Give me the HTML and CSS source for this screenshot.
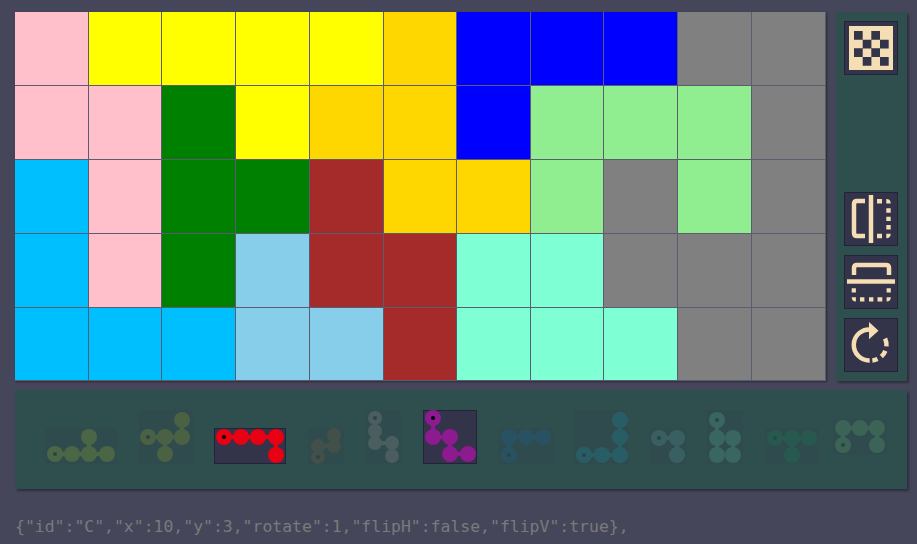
FILE: index.html
```html
<!DOCTYPE html>
<html lang="en">
<head>
    <meta charset="UTF-8">
    <title>Puzzle</title>
    <link rel="stylesheet" href="styles.css">
</head>
<body>
<div class="top">
    <div class="board">
        <i class="c-pink"></i><i class="c-yellow"></i><i class="c-yellow"></i><i class="c-yellow"></i><i class="c-yellow"></i><i class="c-gold"></i><i class="c-blue"></i><i class="c-blue"></i><i class="c-blue"></i><i class="c-gray"></i><i class="c-gray"></i>
        <i class="c-pink"></i><i class="c-pink"></i><i class="c-green"></i><i class="c-yellow"></i><i class="c-gold"></i><i class="c-gold"></i><i class="c-blue"></i><i class="c-lgreen"></i><i class="c-lgreen"></i><i class="c-lgreen"></i><i class="c-gray"></i>
        <i class="c-dsky"></i><i class="c-pink"></i><i class="c-green"></i><i class="c-green"></i><i class="c-brown"></i><i class="c-gold"></i><i class="c-gold"></i><i class="c-lgreen"></i><i class="c-gray"></i><i class="c-lgreen"></i><i class="c-gray"></i>
        <i class="c-dsky"></i><i class="c-pink"></i><i class="c-green"></i><i class="c-sky"></i><i class="c-brown"></i><i class="c-brown"></i><i class="c-aqua"></i><i class="c-aqua"></i><i class="c-gray"></i><i class="c-gray"></i><i class="c-gray"></i>
        <i class="c-dsky"></i><i class="c-dsky"></i><i class="c-dsky"></i><i class="c-sky"></i><i class="c-sky"></i><i class="c-brown"></i><i class="c-aqua"></i><i class="c-aqua"></i><i class="c-aqua"></i><i class="c-gray"></i><i class="c-gray"></i>
    </div>
    <div class="tools">
        <button class="tool">
            <svg width="54" height="54" viewBox="0 0 54 54">
                <rect class="fill" x="5" y="5" width="44" height="44"/>
                <path class="dark" d="M10 10h8.700v8.700h-8.700zM27.300 10h8.700v8.700h-8.700zM18.700 18.700h8.700v8.700h-8.700zM36 18.700h8.700v8.700h-8.700zM10 27.300h8.700v8.700h-8.700zM27.300 27.300h8.700v8.700h-8.700zM18.700 36h8.700v8.700h-8.700zM36 36h8.700v8.700h-8.700z"/>
            </svg>
        </button>
        <button class="tool push">
            <svg width="54" height="54" viewBox="0 0 54 54">
                <path class="line" d="M21 9H13Q10 9 10 12V41Q10 44 13 44H21"/>
                <path class="line" d="M27 3V51"/>
                <path class="fill" d="M33 7h5v4.500h-5zM42.300 7q4.400 0 4.400 4.400h-4.400zM42.300 16.300h4.400v4.400h-4.400zM42.300 24.700h4.400v4.400h-4.400zM42.300 33h4.400v4.400h-4.400zM42.300 41.800h4.400q0 4.400 -4.400 4.400zM33 41.800h5v4.400h-5z"/>
            </svg>
        </button>
        <button class="tool">
            <svg width="54" height="54" viewBox="0 0 54 54">
                <path class="line" d="M10 20V13Q10 10 13 10H42Q45 10 45 13V20"/>
                <path class="line" d="M3 26.500H51"/>
                <path class="fill" d="M7.700 33.300h4.200v4.200h-4.200zM42.600 33.300h4.200v4.200h-4.200zM7.700 42.200h4.200v4.200q-4.200 0 -4.200 -4.200zM16 42.200h4.400v4.200h-4.400zM25 42.200h4.400v4.200h-4.400zM33.500 42.200h4.800v4.200h-4.800zM42.600 42.200h4.200q0 4.200 -4.200 4.200z"/>
            </svg>
        </button>
        <button class="tool">
            <svg width="54" height="54" viewBox="0 0 54 54">
                <path class="line" d="M27 11.500A15.500 15.500 0 1 0 25.700 42.400"/>
                <path class="line" d="M41.050 20.450A15.500 15.500 0 0 1 42.440 28.350M41.370 32.800A15.500 15.500 0 0 1 37.370 38.500M33.550 41.050A15.500 15.500 0 0 1 28.350 42.440"/>
                <path class="fill" d="M25 4L34.500 12.700L25 21.300z"/>
            </svg>
        </button>
    </div>
</div>

<div class="tray">
    <svg class="piece" width="72" height="36"><rect class="bg" width="72" height="36"/>
        <g class="c-yellow"><path class="link" d="M10 26H62M44 26V9"/>
        <circle cx="10" cy="26" r="8"/><circle cx="27" cy="26" r="8"/><circle cx="44" cy="26" r="8"/><circle cx="62" cy="26" r="8"/><circle cx="44" cy="9" r="8"/></g>
        <circle class="dot" cx="10" cy="26" r="2"/>
    </svg>
    <svg class="piece" width="54" height="54"><rect class="bg" width="54" height="54"/>
        <g class="c-gold"><path class="link" d="M9 27H43M43 27V10M26 27V44"/>
        <circle cx="9" cy="27" r="8"/><circle cx="26" cy="27" r="8"/><circle cx="43" cy="27" r="8"/><circle cx="43" cy="10" r="8"/><circle cx="26" cy="44" r="8"/></g>
        <circle class="dot" cx="9" cy="27" r="2"/>
    </svg>
    <svg class="piece on" width="72" height="36"><rect class="bg" x=".5" y=".5" width="71" height="35"/>
        <g class="c-red"><path class="link" d="M10 9H62V27"/>
        <circle cx="10" cy="9" r="8"/><circle cx="27" cy="9" r="8"/><circle cx="44" cy="9" r="8"/><circle cx="62" cy="9" r="8"/><circle cx="62" cy="27" r="8"/></g>
        <circle class="dot" cx="10" cy="9" r="2"/>
    </svg>
    <svg class="piece" width="36" height="36"><rect class="bg" width="36" height="36"/>
        <g class="c-brown"><path class="link" d="M10 29V18H26V7"/>
        <circle cx="10" cy="29" r="7"/><circle cx="10" cy="18" r="7"/><circle cx="26" cy="18" r="7"/><circle cx="26" cy="7" r="7"/></g>
        <circle class="dot" cx="10" cy="29" r="2"/>
    </svg>
    <svg class="piece" width="36" height="54"><rect class="bg" width="36" height="54"/>
        <g class="c-pink"><path class="link" d="M10 8V33H27V46"/>
        <circle cx="10" cy="8" r="7"/><circle cx="10" cy="21" r="7"/><circle cx="10" cy="33" r="7"/><circle cx="27" cy="33" r="7"/><circle cx="27" cy="46" r="7"/></g>
        <circle class="dot" cx="10" cy="8" r="2"/>
    </svg>
    <svg class="piece on" width="54" height="54"><rect class="bg" x=".5" y=".5" width="53" height="53"/>
        <g class="c-purple"><path class="link" d="M10 8V27H27V44H45"/>
        <circle cx="10" cy="8" r="8"/><circle cx="10" cy="27" r="8"/><circle cx="27" cy="27" r="8"/><circle cx="27" cy="44" r="8"/><circle cx="45" cy="44" r="8"/></g>
        <circle class="dot" cx="10" cy="8" r="2"/>
    </svg>
    <svg class="piece" width="54" height="36"><rect class="bg" width="54" height="36"/>
        <g class="c-blue"><path class="link" d="M10 27V9H44"/>
        <circle cx="10" cy="27" r="8"/><circle cx="10" cy="9" r="8"/><circle cx="27" cy="9" r="8"/><circle cx="44" cy="9" r="8"/></g>
        <circle class="dot" cx="10" cy="27" r="2"/>
    </svg>
    <svg class="piece" width="54" height="54"><rect class="bg" width="54" height="54"/>
        <g class="c-dsky"><path class="link" d="M10 45H46V10"/>
        <circle cx="10" cy="45" r="8"/><circle cx="28" cy="45" r="8"/><circle cx="46" cy="45" r="8"/><circle cx="46" cy="27" r="8"/><circle cx="46" cy="10" r="8"/></g>
        <circle class="dot" cx="10" cy="45" r="2"/>
    </svg>
    <svg class="piece" width="36" height="36"><rect class="bg" width="36" height="36"/>
        <g class="c-sky"><path class="link" d="M9 10H27V27"/>
        <circle cx="9" cy="10" r="8"/><circle cx="27" cy="10" r="8"/><circle cx="27" cy="27" r="8"/></g>
        <circle class="dot" cx="9" cy="10" r="2"/>
    </svg>
    <svg class="piece" width="36" height="54"><rect class="bg" width="36" height="54"/>
        <g class="c-aqua"><path class="link" d="M10 10V45M26 28V45"/>
        <circle cx="10" cy="10" r="8"/><circle cx="10" cy="28" r="8"/><circle cx="10" cy="45" r="8"/><circle cx="26" cy="28" r="8"/><circle cx="26" cy="45" r="8"/></g>
        <circle class="dot" cx="10" cy="10" r="2"/>
    </svg>
    <svg class="piece" width="54" height="36"><rect class="bg" width="54" height="36"/>
        <g class="c-green"><path class="link" d="M10 10H44M27 10V27"/>
        <circle cx="10" cy="10" r="8"/><circle cx="27" cy="10" r="8"/><circle cx="44" cy="10" r="8"/><circle cx="27" cy="27" r="8"/></g>
        <circle class="dot" cx="10" cy="10" r="2"/>
    </svg>
    <svg class="piece last" width="54" height="36"><rect class="bg" width="54" height="36"/>
        <g class="c-lgreen"><path class="link" d="M10 26V9H44V26"/>
        <circle cx="10" cy="26" r="8"/><circle cx="10" cy="9" r="8"/><circle cx="27" cy="9" r="8"/><circle cx="44" cy="9" r="8"/><circle cx="44" cy="26" r="8"/></g>
        <circle class="dot" cx="10" cy="26" r="2"/>
    </svg>
</div>

<p class="output">{"id":"C","x":10,"y":3,"rotate":1,"flipH":false,"flipV":true},</p>
</body>
</html>
```

FILE: styles.css
```css
* {
    margin: 0;
    padding: 0;
    box-sizing: border-box;
}

body {
    width: 917px;
    height: 544px;
    padding: 12px 10px 0 15px;
    overflow: hidden;
    background: #46465a;
}

.top {
    display: flex;
    gap: 10px;
}

/* board */
.board {
    display: grid;
    grid-template-columns: 74px 73px 74px 74px 74px 73px 74px 73px 74px 74px 74px;
    grid-template-rows: 74px 74px 74px 74px 73px;
    width: 811px;
    height: 369px;
    box-shadow: 1px 1px 2px #2a2a3a;
}
.board i {
    border-right: 1px solid #5c5c70;
    border-bottom: 1px solid #5c5c70;
}

.board .c-pink { background: pink; }
.board .c-yellow { background: yellow; }
.board .c-gold { background: gold; }
.board .c-blue { background: blue; }
.board .c-gray { background: gray; }
.board .c-green { background: green; }
.board .c-lgreen { background: lightgreen; }
.board .c-dsky { background: deepskyblue; }
.board .c-sky { background: skyblue; }
.board .c-brown { background: brown; }
.board .c-aqua { background: aquamarine; }

/* right buttons */
.tools {
    display: flex;
    flex-direction: column;
    gap: 9px;
    width: 71px;
    height: 369px;
    padding: 9px 8px;
    background: #2f4f4f;
    box-shadow: 2px 2px 2px #2e2e3e;
}
.tool {
    display: block;
    width: 54px;
    height: 54px;
    background: #33334a;
    border: 1px solid #22223a;
}
.tool svg {
    display: block;
    margin: -1px;
}
.push {
    margin-top: auto;
}
.fill {
    fill: wheat;
}
.dark {
    fill: #33334a;
}
.line {
    fill: none;
    stroke: wheat;
    stroke-width: 4.500;
}

/* pieces */
.tray {
    display: flex;
    align-items: flex-end;
    gap: 21.600px;
    width: 892px;
    height: 99px;
    margin-top: 9px;
    padding: 0 0 25px 30px;
    background: #2f4f4f;
    box-shadow: 2px 2px 2px #2e2e3e;
}
.piece {
    display: block;
    flex: none;
    opacity: .13;
}
.piece.on {
    opacity: 1;
}
.piece.last {
    margin-left: -8px;
    margin-bottom: 9px;
}
.bg {
    fill: #33334a;
}
.on .bg {
    stroke: #22223a;
}
.dot {
    fill: #000;
}
.link {
    fill: none;
    stroke-width: 4;
}

.c-yellow { fill: yellow; stroke: yellow; }
.c-gold { fill: gold; stroke: gold; }
.c-red { fill: #e90012; stroke: #e90012; }
.c-brown { fill: #c85a2a; stroke: #c85a2a; }
.c-pink { fill: pink; stroke: pink; }
.c-purple { fill: #8e1a90; stroke: #8e1a90; }
.c-blue { fill: #0060e0; stroke: #0060e0; }
.c-dsky { fill: deepskyblue; stroke: deepskyblue; }
.c-sky { fill: skyblue; stroke: skyblue; }
.c-aqua { fill: aquamarine; stroke: aquamarine; }
.c-green { fill: #00a050; stroke: #00a050; }
.c-lgreen { fill: lightgreen; stroke: lightgreen; }
.piece circle { stroke: none; }

.output {
    margin-top: 26px;
    font: 16.450px/24px "DejaVu Sans Mono", monospace;
    color: #7a7a7a;
    white-space: nowrap;
}
```
